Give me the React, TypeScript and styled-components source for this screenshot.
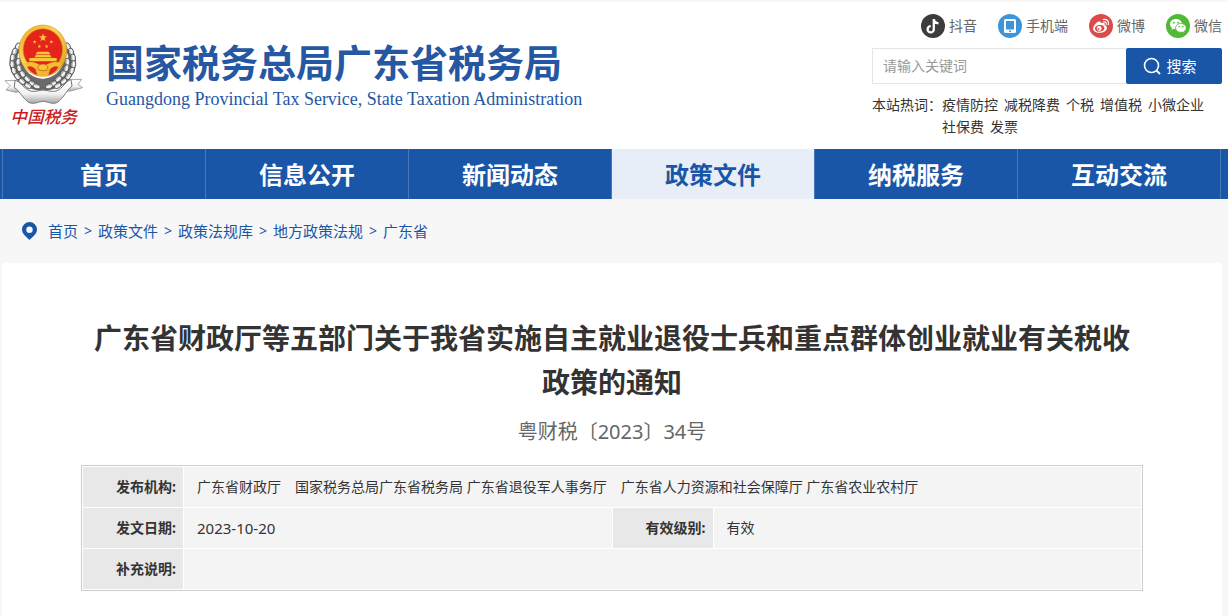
import React from "react";
import styled, { createGlobalStyle } from "styled-components";

const BLUE = "#1a56a8";

const GlobalStyle = createGlobalStyle`
  *, *::before, *::after { box-sizing: border-box; }
  body {
    margin: 0;
    background: #f7f7f7;
    color: #333;
    font: 14px/22px "Noto Sans", "Noto Sans CJK SC", sans-serif;
  }
  a { color: inherit; text-decoration: none; }
`;

const Header = styled.header`
  display: flex;
  justify-content: space-between;
  align-items: flex-start;
  margin-top: 2px;
  padding: 12px 6px 11px 2px;
  background: #fff;
`;

const Brand = styled.a`
  display: flex;
  align-items: flex-start;
  gap: 20px;
  padding-top: 8px;
`;

const BrandText = styled.div`
  padding-top: 18px;
  color: #2657a3;
`;

const SiteName = styled.div`
  font-size: 38px;
  line-height: 44px;
  font-weight: 700;
  white-space: nowrap;
`;

const SiteNameEn = styled.div`
  font-family: "Liberation Serif", serif;
  font-size: 18px;
  line-height: 30px;
  white-space: nowrap;
`;

const Tools = styled.div`
  flex: 0 0 350px;
`;

const Channels = styled.nav`
  display: flex;
  justify-content: flex-end;
  gap: 21px;
`;

const Channel = styled.a`
  display: flex;
  align-items: center;
  gap: 4px;
  height: 24px;
  color: #666;
`;

const Search = styled.form`
  display: flex;
  height: 36px;
  margin: 10px 0;
`;

const SearchInput = styled.input`
  flex: 1;
  min-width: 0;
  padding: 0 10px;
  border: 1px solid #e5e5e5;
  border-right: 0;
  border-radius: 0;
  background: #fff;
  font: inherit;
  outline: none;
  &::placeholder { color: #999; opacity: 1; }
`;

const SearchButton = styled.button`
  display: flex;
  align-items: center;
  justify-content: center;
  gap: 5px;
  width: 96px;
  padding: 0 8px 0 0;
  border: 0;
  border-radius: 2px;
  background: ${BLUE};
  color: #fff;
  font: inherit;
  font-size: 15px;
  cursor: pointer;
`;

const HotWords = styled.div`
  display: flex;
`;

const HotLabel = styled.span`
  flex: none;
`;

const HotList = styled.div`
  display: flex;
  flex-wrap: wrap;
  column-gap: 6px;
`;

const MainNav = styled.nav`
  display: flex;
  padding: 0 7px 0 2px;
  background: ${BLUE};
`;

const NavItem = styled.a<{ $active?: boolean }>`
  flex: 1;
  height: 50px;
  border-left: 1px solid #4778b9;
  background: ${(p) => (p.$active ? "#e8eef7" : BLUE)};
  color: ${(p) => (p.$active ? BLUE : "#fff")};
  font-size: 24px;
  line-height: 52px;
  font-weight: 700;
  text-align: center;
  &:last-child { border-right: 1px solid #4778b9; }
`;

const Breadcrumb = styled.nav`
  display: flex;
  align-items: center;
  height: 64px;
  padding-left: 22px;
  color: ${BLUE};
  font-size: 15px;
  svg { margin-right: 11px; }
`;

const Separator = styled.span`
  width: 20px;
  font-size: 14px;
  text-align: center;
`;

const Panel = styled.main`
  margin: 0 6px 0 2px;
  padding: 53px 79px 40px;
  border-radius: 4px;
  background: #fff;
`;

const Title = styled.h1`
  margin: 0;
  font-size: 28px;
  line-height: 44px;
  font-weight: 700;
  text-align: center;
`;

const DocNumber = styled.p`
  margin: 14px 0 19px;
  color: #666;
  font-size: 20px;
  line-height: 28px;
  text-align: center;
`;

const InfoTable = styled.table`
  width: 100%;
  table-layout: fixed;
  border: 1px solid #ccc;
  border-collapse: separate;
  border-spacing: 1px;
`;

const LabelCol = styled.col`
  width: 100px;
`;

const LabelCell = styled.th`
  height: 40px;
  padding: 0 7px 0 0;
  background: #e8e8e8;
  font-weight: 700;
  text-align: right;
`;

const ValueCell = styled.td<{ $numeric?: boolean }>`
  height: 40px;
  padding: 0 13px;
  background: #f4f4f4;
  font-size: ${(p) => (p.$numeric ? "15px" : "14px")};
`;

const star = (cx: number, cy: number, r: number) =>
  Array.from({ length: 10 }, (_, i) => {
    const a = (Math.PI / 5) * i - Math.PI / 2;
    const q = i % 2 ? r * 0.4 : r;
    return `${(cx + q * Math.cos(a)).toFixed(1)},${(cy + q * Math.sin(a)).toFixed(1)}`;
  }).join(" ");

const LEAVES = [
  [54, 88, 25], [44, 104, 18], [38, 122, 8], [37, 142, -6], [42, 161, -20], [52, 178, -36], [66, 193, -50],
  [58, 116, 16], [55, 135, 2], [58, 154, -16], [68, 171, -32], [82, 186, -46], [97, 200, -60],
  [84, 206, -60], [110, 208, -74],
];

function Wreath() {
  return (
    <g>
      <path d="M58 78C26 102 20 146 42 178C58 204 88 220 130 222V186C84 182 62 150 62 100Z" fill="#6a6a6a" />
      {LEAVES.map(([x, y, r]) => (
        <g key={`${x}-${y}`} transform={`translate(${x} ${y}) rotate(${r})`}>
          <ellipse rx="7.5" ry="11" fill="#e4e4e4" stroke="#4a4a4a" strokeWidth="2.5" />
          <path d="M-2-7Q2 0-2 7" fill="none" stroke="#fff" strokeWidth="3" />
          <path d="M3-6Q5 0 3 6" fill="none" stroke="#8a8a8a" strokeWidth="2" />
        </g>
      ))}
    </g>
  );
}

function Emblem() {
  return (
    <svg width="84" height="110" viewBox="6 15 252 330" role="img" aria-label="中国税务">
      <defs>
        <linearGradient id="gold" x1="0" y1="0" x2="1" y2="1">
          <stop offset="0" stopColor="#eda61f" />
          <stop offset=".4" stopColor="#fbd654" />
          <stop offset="1" stopColor="#dd9a18" />
        </linearGradient>
        <linearGradient id="silver" x1="0" y1="0" x2="0" y2="1">
          <stop offset="0" stopColor="#fff" />
          <stop offset=".6" stopColor="#f2f2f2" />
          <stop offset="1" stopColor="#a5a5a5" />
        </linearGradient>
      </defs>
      <Wreath />
      <g transform="translate(257 0) scale(-1 1)"><Wreath /></g>
      <path d="M15 191L50 190L66 222L48 226L18 219L30 206Z" fill="url(#silver)" stroke="#999" strokeWidth="2.5" />
      <path d="M245 187L208 188L194 222L212 222L248 212L234 202Z" fill="url(#silver)" stroke="#999" strokeWidth="2.5" />
      <path d="M45 190C60 192 72 216 92 222C106 226 118 219 129 219C140 219 154 226 168 222C188 216 198 190 213 188L216 208C204 214 190 244 172 256C158 264 142 253 129 253C116 253 102 264 86 256C68 244 56 218 43 212Z" fill="url(#silver)" stroke="#777" strokeWidth="3" />
      <ellipse cx="128.5" cy="101" rx="72" ry="77" fill="url(#gold)" stroke="#c98313" strokeWidth="1.5" />
      <ellipse cx="128.5" cy="98" rx="59" ry="63" fill="#e5241c" stroke="#d28b19" strokeWidth="2" />
      <g fill="#f8c93a">
        <polygon points={star(129, 62, 13)} />
        <polygon points={star(104, 75, 6)} />
        <polygon points={star(118, 88, 6)} />
        <polygon points={star(140, 88, 6)} />
        <polygon points={star(154, 75, 6)} />
        <path d="M112 104H146L151 112H107ZM108 114H150L155 121H103ZM88 123H170V133H88Z" />
      </g>
      <path d="M106 113H152M100 122H158" stroke="#d9861a" strokeWidth="1.5" />
      <path d="M74 139Q92 132 108 138L128 148L150 138Q166 132 184 139L176 154Q163 148 151 157L128 163L106 157Q94 148 82 154Z" fill="#f4bd33" />
      <path d="M82 150Q94 144 106 156L112 174Q92 168 82 150ZM175 150Q163 144 151 156L145 174Q165 168 175 150Z" fill="#e0271b" />
      <ellipse cx="128.5" cy="151" rx="15" ry="10" fill="#f6c53c" stroke="#c64614" strokeWidth="2" />
      <path d="M112 166H145L140 178H117Z" fill="#f0b82e" />
      <text
        x="131"
        y="317"
        textAnchor="middle"
        fill="#c91b20"
        fontFamily="'Noto Sans CJK SC', sans-serif"
        fontSize="50"
        fontStyle="italic"
        fontWeight="500"
      >
        中国税务
      </text>
    </svg>
  );
}

function DouyinIcon() {
  return (
    <svg width="24" height="24" viewBox="0 0 24 24" aria-hidden="true">
      <circle cx="12" cy="12" r="12" fill="#3c3c3c" />
      <path d="M12.8 5V15.3A3.1 3.1 0 1 1 9.7 12.2M12.8 5.3C13.2 7.8 14.8 9.2 17.5 9.4" fill="none" stroke="#fff" strokeWidth="2.3" />
    </svg>
  );
}

function MobileIcon() {
  return (
    <svg width="24" height="24" viewBox="0 0 24 24" aria-hidden="true">
      <circle cx="12" cy="12" r="12" fill="#3d94d9" />
      <rect x="6" y="5" width="12" height="14" rx="1.5" fill="#fff" />
      <rect x="8" y="7" width="8" height="8.5" fill="#3d94d9" />
      <circle cx="12" cy="17.2" r="1" fill="#3d94d9" />
    </svg>
  );
}

function WeiboIcon() {
  return (
    <svg width="24" height="24" viewBox="0 0 24 24" aria-hidden="true">
      <circle cx="12" cy="12" r="12" fill="#dc4b4a" />
      <path d="M9.7 7.6C11.3 7 12.2 7.9 11.8 9.3C14.5 8.3 16.2 9 15.6 11C20 12.4 18.2 18.6 10.9 18.8C6.6 18.9 4 17 4.2 14.5C4.4 11.8 7.2 8.5 9.7 7.6Z" fill="#fff" />
      <ellipse cx="10.7" cy="14.3" rx="4.7" ry="3.3" transform="rotate(-10 10.7 14.3)" fill="#dc4b4a" />
      <circle cx="10.2" cy="14.5" r="2.4" fill="#fff" />
      <circle cx="9.5" cy="14.9" r=".9" fill="#dc4b4a" />
      <path d="M14.2 5.5C17.8 4.7 20.4 7.3 19.3 10.7M14.7 7.9C16.5 7.5 17.7 8.7 17.2 10.4" fill="none" stroke="#fff" strokeWidth="1.2" strokeLinecap="round" />
    </svg>
  );
}

function WechatIcon() {
  return (
    <svg width="24" height="24" viewBox="0 0 24 24" aria-hidden="true">
      <circle cx="12" cy="12" r="12" fill="#52b936" />
      <path d="M10 5C6.6 5 4 7.2 4 10C4 11.6 4.8 13 6.1 13.9L5.5 15.8L7.8 14.7C8.5 14.9 9.2 15 10 15C13.4 15 16 12.8 16 10S13.4 5 10 5Z" fill="#fff" />
      <path d="M15 9.5C11.9 9.5 9.6 11.4 9.6 13.9S11.9 18.3 15 18.3C15.6 18.3 16.2 18.2 16.8 18L18.7 19L18.2 17.3C19.5 16.5 20.2 15.3 20.2 13.9C20.2 11.4 18 9.5 15 9.5Z" fill="#fff" stroke="#52b936" strokeWidth=".8" />
      <g fill="#52b936">
        <circle cx="8" cy="8.7" r=".9" />
        <circle cx="12" cy="8.7" r=".9" />
        <circle cx="13.2" cy="12.6" r=".8" />
        <circle cx="16.7" cy="12.6" r=".8" />
      </g>
    </svg>
  );
}

function SearchIcon() {
  return (
    <svg width="18" height="18" viewBox="0 0 18 18" fill="none" stroke="#fff" strokeWidth="1.6" aria-hidden="true">
      <circle cx="8.5" cy="8.5" r="7" />
      <path d="M13.4 13.4L17 17" strokeWidth="2" />
    </svg>
  );
}

function PinIcon() {
  return (
    <svg width="15" height="18" viewBox="0 0 15 18" aria-hidden="true">
      <path fillRule="evenodd" d="M7.5 0A7.5 7.5 0 0 0 0 7.5C0 11.6 3.4 13.8 7.5 18C11.6 13.8 15 11.6 15 7.5A7.5 7.5 0 0 0 7.5 0ZM7.5 4.6A3.2 3.2 0 1 1 7.5 11A3.2 3.2 0 0 1 7.5 4.6Z" fill={BLUE} />
    </svg>
  );
}

const channels = [
  { label: "抖音", Icon: DouyinIcon },
  { label: "手机端", Icon: MobileIcon },
  { label: "微博", Icon: WeiboIcon },
  { label: "微信", Icon: WechatIcon },
];

const hotWords = ["疫情防控", "减税降费", "个税", "增值税", "小微企业", "社保费", "发票"];
const sections = ["首页", "信息公开", "新闻动态", "政策文件", "纳税服务", "互动交流"];
const trail = ["首页", "政策文件", "政策法规库", "地方政策法规", "广东省"];

export default function App() {
  return (
    <>
      <GlobalStyle />
      <Header>
        <Brand href="#">
          <Emblem />
          <BrandText>
            <SiteName>国家税务总局广东省税务局</SiteName>
            <SiteNameEn>Guangdong Provincial Tax Service, State Taxation Administration</SiteNameEn>
          </BrandText>
        </Brand>
        <Tools>
          <Channels aria-label="新媒体">
            {channels.map(({ label, Icon }) => (
              <Channel href="#" key={label}>
                <Icon />
                {label}
              </Channel>
            ))}
          </Channels>
          <Search role="search" onSubmit={(e) => e.preventDefault()}>
            <SearchInput type="text" aria-label="搜索关键词" placeholder="请输入关键词" />
            <SearchButton type="submit">
              <SearchIcon />
              搜索
            </SearchButton>
          </Search>
          <HotWords>
            <HotLabel>本站热词：</HotLabel>
            <HotList>
              {hotWords.map((w) => (
                <a href="#" key={w}>{w}</a>
              ))}
            </HotList>
          </HotWords>
        </Tools>
      </Header>
      <MainNav aria-label="主导航">
        {sections.map((s) => (
          <NavItem href="#" key={s} $active={s === "政策文件"}>{s}</NavItem>
        ))}
      </MainNav>
      <Breadcrumb aria-label="当前位置">
        <PinIcon />
        {trail.map((t, i) => (
          <React.Fragment key={t}>
            {i > 0 && <Separator>&gt;</Separator>}
            <a href="#">{t}</a>
          </React.Fragment>
        ))}
      </Breadcrumb>
      <Panel>
        <Title>广东省财政厅等五部门关于我省实施自主就业退役士兵和重点群体创业就业有关税收政策的通知</Title>
        <DocNumber>粤财税〔2023〕34号</DocNumber>
        <InfoTable>
          <colgroup>
            <LabelCol />
            <col />
            <LabelCol />
            <col />
          </colgroup>
          <tbody>
            <tr>
              <LabelCell scope="row">发布机构:</LabelCell>
              <ValueCell colSpan={3}>
                广东省财政厅　国家税务总局广东省税务局 广东省退役军人事务厅　广东省人力资源和社会保障厅 广东省农业农村厅
              </ValueCell>
            </tr>
            <tr>
              <LabelCell scope="row">发文日期:</LabelCell>
              <ValueCell $numeric>2023-10-20</ValueCell>
              <LabelCell scope="row">有效级别:</LabelCell>
              <ValueCell>有效</ValueCell>
            </tr>
            <tr>
              <LabelCell scope="row">补充说明:</LabelCell>
              <ValueCell colSpan={3} />
            </tr>
          </tbody>
        </InfoTable>
      </Panel>
    </>
  );
}
